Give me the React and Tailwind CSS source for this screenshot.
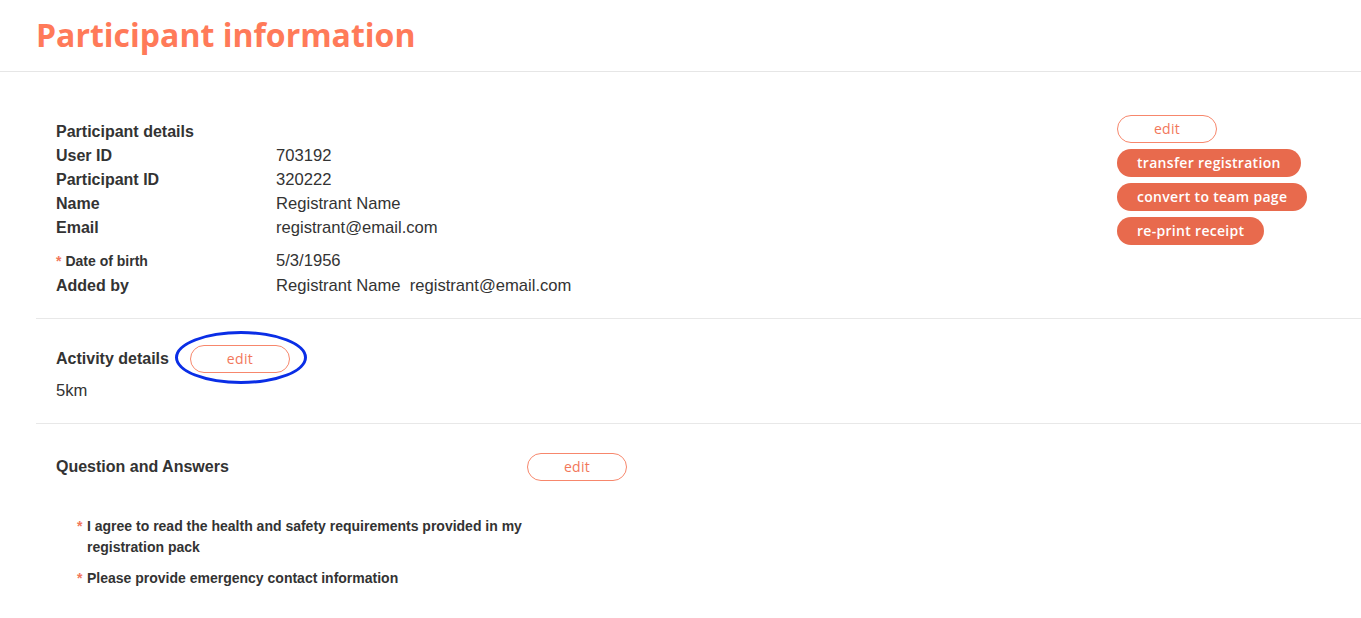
import React from 'react';

const sans = { fontFamily: '"Liberation Sans", Arial, sans-serif' };
const round = { fontFamily: '"Open Sans", "Noto Sans", sans-serif' };

function OutlineButton({ className = '' }) {
  return (
    <button
      style={round}
      className={`h-[28px] w-[100px] rounded-full border border-[#f7876c] bg-white pb-[1px] text-[14px] font-medium tracking-[0.3px] text-[#f2775b] ${className}`}
    >
      edit
    </button>
  );
}

function FillButton({ children }) {
  return (
    <button
      style={round}
      className="h-[28px] rounded-full bg-[#e86a4d] px-[20px] pb-[1px] text-left text-[14px] font-semibold tracking-[0.3px] text-white"
    >
      {children}
    </button>
  );
}

const rows = [
  ['User ID', '703192'],
  ['Participant ID', '320222'],
  ['Name', 'Registrant Name'],
  ['Email', 'registrant@email.com'],
];

export default function App() {
  return (
    <div className="min-h-screen bg-white text-[#333]" style={sans}>
      <header className="h-[72px] border-b border-[#e6e6e6] pl-[36px] pt-[13px]">
        <h1 style={round} className="text-[32px] font-bold leading-[44px] text-[#ff7a59]">
          Participant information
        </h1>
      </header>

      <div className="ml-[36px]">
        <section className="flex border-b border-[#e8e8e8] pl-[20px] pt-[48px] pb-[20px]">
          <div className="flex-1">
            <div className="text-[16px] font-bold leading-[24px]">Participant details</div>
            {rows.map(([k, v]) => (
              <div key={k} className="flex text-[16px] leading-[24px]">
                <div className="w-[220px] font-bold">{k}</div>
                <div className="text-[16.6px]">{v}</div>
              </div>
            ))}
            <div className="mt-[9px] flex items-center leading-[24px]">
              <div className="w-[220px] text-[14px] font-bold">
                <span className="mr-[4px] text-[#f2775b]">*</span>Date of birth
              </div>
              <div className="text-[16.6px]">5/3/1956</div>
            </div>
            <div className="mt-[1px] flex text-[16px] leading-[24px]">
              <div className="w-[220px] font-bold">Added by</div>
              <div className="text-[16.6px]">Registrant Name&nbsp; registrant@email.com</div>
            </div>
          </div>
          <div className="mr-[51px] flex w-[193px] flex-col items-start gap-[6px]" style={{ marginTop: -5 }}>
            <OutlineButton />
            <FillButton>transfer registration</FillButton>
            <FillButton>convert to team page</FillButton>
            <FillButton>re-print receipt</FillButton>
          </div>
        </section>

        <section className="border-b border-[#e8e8e8] pl-[20px] pt-[26px] pb-[20px]">
          <div className="flex items-center">
            <div className="text-[16px] font-bold leading-[24px]">Activity details</div>
            <div className="relative ml-[21px]">
              <OutlineButton className="w-[99px]" />
              <div className="pointer-events-none absolute left-[-15px] top-[-14px] h-[53px] w-[132px] rounded-[50%] border-[3px] border-[#0a2ee6]" />
            </div>
          </div>
          <div className="mt-[6px] text-[16.6px] leading-[24px]">5km</div>
        </section>

        <section className="pl-[20px] pt-[29px]">
          <div className="flex items-center">
            <div className="w-[471px] text-[16px] font-bold leading-[24px]">Question and Answers</div>
            <OutlineButton />
          </div>
          <div className="ml-[21px] mt-[35px] w-[470px] text-[14px] font-bold leading-[21px]">
            <div className="flex">
              <span className="w-[10px] shrink-0 text-[#f2775b]">*</span>
              <span>I agree to read the health and safety requirements provided in my registration pack</span>
            </div>
            <div className="mt-[10px] flex">
              <span className="w-[10px] shrink-0 text-[#f2775b]">*</span>
              <span>Please provide emergency contact information</span>
            </div>
          </div>
        </section>
      </div>
    </div>
  );
}
